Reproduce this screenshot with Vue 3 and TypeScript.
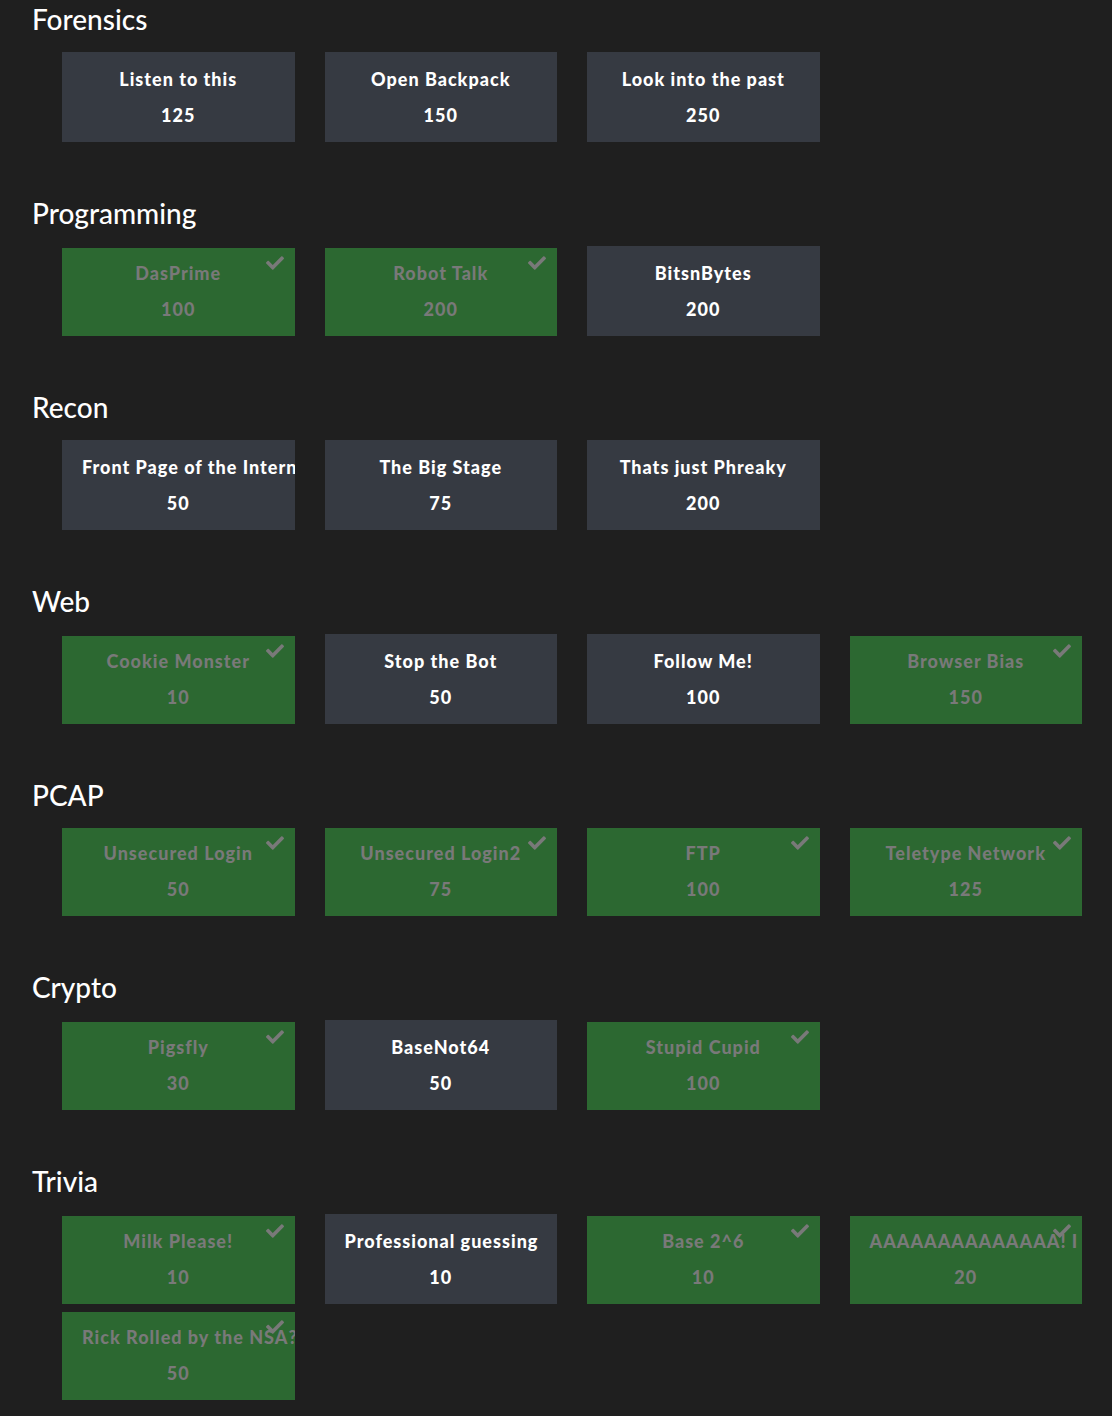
<script setup lang="ts">
interface Challenge {
  name: string
  value: number
  solved?: boolean
}

interface Category {
  name: string
  challenges: Challenge[]
}

const categories: Category[] = [
  {
    name: 'Forensics',
    challenges: [
      { name: 'Listen to this', value: 125 },
      { name: 'Open Backpack', value: 150 },
      { name: 'Look into the past', value: 250 },
    ],
  },
  {
    name: 'Programming',
    challenges: [
      { name: 'DasPrime', value: 100, solved: true },
      { name: 'Robot Talk', value: 200, solved: true },
      { name: 'BitsnBytes', value: 200 },
    ],
  },
  {
    name: 'Recon',
    challenges: [
      { name: 'Front Page of the Intern', value: 50 },
      { name: 'The Big Stage', value: 75 },
      { name: 'Thats just Phreaky', value: 200 },
    ],
  },
  {
    name: 'Web',
    challenges: [
      { name: 'Cookie Monster', value: 10, solved: true },
      { name: 'Stop the Bot', value: 50 },
      { name: 'Follow Me!', value: 100 },
      { name: 'Browser Bias', value: 150, solved: true },
    ],
  },
  {
    name: 'PCAP',
    challenges: [
      { name: 'Unsecured Login', value: 50, solved: true },
      { name: 'Unsecured Login2', value: 75, solved: true },
      { name: 'FTP', value: 100, solved: true },
      { name: 'Teletype Network', value: 125, solved: true },
    ],
  },
  {
    name: 'Crypto',
    challenges: [
      { name: 'Pigsfly', value: 30, solved: true },
      { name: 'BaseNot64', value: 50 },
      { name: 'Stupid Cupid', value: 100, solved: true },
    ],
  },
  {
    name: 'Trivia',
    challenges: [
      { name: 'Milk Please!', value: 10, solved: true },
      { name: 'Professional guessing', value: 10 },
      { name: 'Base 2^6', value: 10, solved: true },
      { name: 'AAAAAAAAAAAAAA! I', value: 20, solved: true },
      { name: 'Rick Rolled by the NSA?', value: 50, solved: true },
    ],
  },
]
</script>

<template>
  <main class="board">
    <section v-for="category in categories" :key="category.name" class="category">
      <h2 class="category-name">{{ category.name }}</h2>
      <div class="challenges">
        <button
          v-for="challenge in category.challenges"
          :key="challenge.name"
          type="button"
          class="challenge"
          :class="{ solved: challenge.solved }"
        >
          <span class="line">{{ challenge.name }}</span>
          <span class="line">{{ challenge.value }}</span>
          <svg v-if="challenge.solved" class="check" viewBox="0 0 512 512" aria-hidden="true">
            <path
              d="M173.898 439.404l-166.4-166.4c-9.997-9.997-9.997-26.206 0-36.204l36.203-36.204c9.997-9.998 26.207-9.998 36.204 0L192 312.69 432.095 72.596c9.997-9.997 26.207-9.997 36.204 0l36.203 36.204c9.997 9.997 9.997 26.206 0 36.204l-294.4 294.401c-9.998 9.997-26.207 9.997-36.204-.001z"
            />
          </svg>
        </button>
      </div>
    </section>
  </main>
</template>

<style>
body {
  margin: 0;
  background: #1f1f1f;
}
</style>

<style scoped>
.board {
  display: flex;
  flex-direction: column;
  gap: 52px;
  padding: 0 30px 16px 32px;
  font-family: Lato, "Open Sans", sans-serif;
  color: #fff;
}

.category-name {
  margin: 0 0 14px;
  font-size: 28px;
  font-weight: 500;
  line-height: 38px;
}

.challenges {
  display: grid;
  grid-template-columns: repeat(4, minmax(0, 1fr));
  align-items: end;
  gap: 8px 30px;
  padding-left: 30px;
}

.challenge {
  position: relative;
  overflow: hidden;
  padding: 9px 20px;
  border: 0;
  border-radius: 0;
  background: #363a42;
  color: #fff;
  font-family: inherit;
  font-size: 18px;
  font-weight: 900;
  line-height: 36px;
  letter-spacing: 1px;
  text-align: center;
  white-space: nowrap;
  cursor: pointer;
}

.challenge.solved {
  padding-top: 7px;
  background: #2c6831;
  color: #797979;
}

.line {
  display: block;
}

.check {
  position: absolute;
  top: 6px;
  right: 11px;
  width: 18px;
  height: 18px;
  fill: currentColor;
}
</style>
